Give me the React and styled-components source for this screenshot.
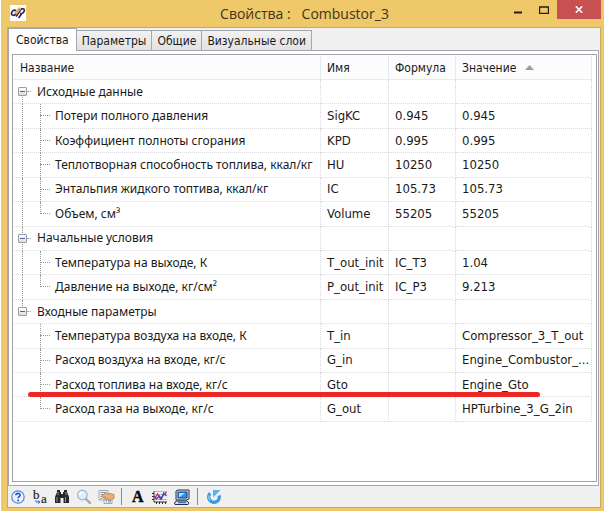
import React from "react";
import styled, { createGlobalStyle } from "styled-components";

const dotted = "1px dotted #d9d9de";

const GlobalStyle = createGlobalStyle`
  *, *::before, *::after { box-sizing: border-box; }
  html, body, #root { height: 100%; }
  body { margin: 0; background: #fff; color: #1a1a1a; }
  body, button { font-family: "DejaVu Sans Condensed", "DejaVu Sans", "Noto Sans", sans-serif; }
`;

const Window = styled.main`
  display: flex;
  flex-direction: column;
  min-height: 100%;
  margin-left: 1px;
  padding: 0 3px 3px 6px;
  background: #efc869;
`;

const TitleBar = styled.header`
  display: flex;
  align-items: flex-start;
  height: 27px;
`;

const AppIcon = styled.svg`
  flex: none;
  width: 16px;
  height: 16px;
  margin: 5px 0 0 3px;
  background: #fff;
`;

const Title = styled.h1`
  flex: 1;
  margin: 0 0 0 78px;
  font: 400 14px/28px "Open Sans", "Noto Sans", sans-serif;
  color: #40361f;
  text-align: center;
  white-space: pre;
`;

const WindowButtons = styled.div`
  display: flex;
`;

const WindowButton = styled.button`
  display: flex;
  align-items: center;
  justify-content: center;
  width: ${(p) => (p.$close ? 44 : 26)}px;
  height: 19px;
  padding: 0;
  border: 0;
  background: ${(p) => (p.$close ? "#c75050" : "transparent")};
`;

const Client = styled.div`
  flex: 1;
  display: flex;
  flex-direction: column;
  border: 1px solid #c5ab68;
  background: #f0f0f0;
`;

const Tabs = styled.div`
  display: flex;
  align-items: flex-end;
  height: 22px;
`;

const Tab = styled.button`
  position: relative;
  height: ${(p) => (p.$selected ? 23 : 20)}px;
  padding: ${(p) => (p.$selected ? "0 7px 1px" : "0 5px")};
  margin-bottom: ${(p) => (p.$selected ? -1 : 0)}px;
  border: 1px solid #a5a7ac;
  border-width: 1px 1px 0 ${(p) => (p.$selected ? 1 : 0)}px;
  background: ${(p) => (p.$selected ? "#fff" : "linear-gradient(#f2f2f2, #e2e2e2)")};
  color: #1a1a1a;
  font-size: 12px;
  white-space: nowrap;
`;

const Panel = styled.section`
  flex: 1;
  display: flex;
  margin-right: 1px;
  padding: 3px 1px 3px 3px;
  border: 1px solid #a5a7ac;
  background: #fff;
`;

const Sheet = styled.div`
  flex: 1;
  padding: 1px 4px 0 1px;
  border: 1px solid #a0a3aa;
`;

const Table = styled.table`
  width: 100%;
  height: 366px;
  table-layout: fixed;
  border-collapse: separate;
  border-spacing: 0;
  font-size: 13px;
  line-height: 16px;
`;

const Col = styled.col`
  width: ${(p) => p.$width};
`;

const HeadCell = styled.th`
  height: 24px;
  padding: 0 0 0 6px;
  border-right: 1px solid #dfebf5;
  border-bottom: 1px solid #dfebf5;
  background: #fcfcfd;
  font-size: 12px;
  font-weight: 400;
  text-align: left;
  white-space: nowrap;
`;

const SortMark = styled.svg`
  width: 9px;
  height: 5px;
  margin-left: 9px;
  vertical-align: 2px;
`;

const Row = styled.tr`
  position: relative;
`;

const Cell = styled.td`
  height: 24px;
  padding: 0 0 0 6px;
  border-right: ${dotted};
  border-bottom: ${dotted};
  overflow: hidden;
  text-overflow: ellipsis;
  white-space: nowrap;
`;

const NameCell = styled.th`
  position: relative;
  height: 24px;
  padding: 0 0 0 ${(p) => (p.$group ? 23 : 41)}px;
  border-right: ${dotted};
  border-bottom: ${dotted};
  font-family: "Noto Sans", "DejaVu Sans Condensed", sans-serif;
  font-size: 12px;
  font-weight: 400;
  text-align: left;
  white-space: nowrap;

  &::before {
    content: "";
    position: absolute;
    left: ${(p) => (p.$group ? 13 : 26)}px;
    top: 11px;
    width: ${(p) => (p.$group ? 4 : 10)}px;
    border-top: 1px dotted #9a9a9a;
  }
`;

const Branch = styled.span`
  position: absolute;
  left: ${(p) => (p.$inner ? 26 : 8)}px;
  top: ${(p) => (p.$from === "middle" ? "50%" : "0")};
  bottom: ${(p) => (p.$to === "middle" ? "50%" : "-1px")};
  border-left: 1px dotted #9a9a9a;
`;

const Toggle = styled.button`
  position: absolute;
  left: 4px;
  top: 7px;
  width: 9px;
  height: 9px;
  padding: 0;
  border: 1px solid #9a9ca2;
  border-radius: 1px;
  background: linear-gradient(#4a62ac, #4a62ac) center / 5px 1px no-repeat, linear-gradient(#fff, #dedede);
`;

const Marker = styled.span`
  position: absolute;
  z-index: 1;
  left: 14px;
  right: 52px;
  bottom: 0;
  height: 5px;
  border-radius: 3px;
  background: #ee2724;
`;

const Toolbar = styled.div`
  display: flex;
  align-items: center;
  height: 21px;
  padding: 0 2px;
  gap: 6px;
`;

const Tool = styled.button`
  display: flex;
  width: 16px;
  height: 16px;
  padding: 0;
  border: 0;
  background: none;

  svg { width: 16px; height: 16px; overflow: visible; }
`;

const Divider = styled.span`
  width: 1px;
  height: 17px;
  margin: 0 2px 0 1px;
  background: #8b8b8b;
`;

const groups = [
  {
    name: "Исходные данные",
    rows: [
      ["Потери полного давления", "SigKC", "0.945", "0.945"],
      ["Коэффициент полноты сгорания", "KPD", "0.995", "0.995"],
      ["Теплотворная способность топлива, ккал/кг", "HU", "10250", "10250"],
      ["Энтальпия жидкого топтива, ккал/кг", "IC", "105.73", "105.73"],
      ["Объем, см³", "Volume", "55205", "55205"],
    ],
  },
  {
    name: "Начальные условия",
    rows: [
      ["Температура на выходе, К", "T_out_init", "IC_T3", "1.04"],
      ["Давление на выходе, кг/см²", "P_out_init", "IC_P3", "9.213"],
    ],
  },
  {
    name: "Входные параметры",
    rows: [
      ["Температура воздуха на входе, К", "T_in", "", "Compressor_3_T_out"],
      ["Расход воздуха на входе, кг/с", "G_in", "", "Engine_Combustor_..."],
      ["Расход топлива на входе, кг/с", "Gto", "", "Engine_Gto", true],
      ["Расход газа на выходе, кг/с", "G_out", "", "HPTurbine_3_G_2in"],
    ],
  },
];

const tools = [
  ["Справка", (
    <svg viewBox="0 0 16 16">
      <circle cx="8" cy="8" r="6.2" fill="#edf4ff" stroke="#5b86d8" strokeWidth="1.2" />
      <path d="M5.900 6.300c.1-2.700 4.300-2.500 4.200-.1-.1 1.400-2 1.500-2 3.100" fill="none" stroke="#2457c5" strokeWidth="1.7" />
      <circle cx="8.1" cy="11.4" r="1" fill="#2457c5" />
    </svg>
  )],
  ["Переименовать", (
    <svg viewBox="0 0 16 16" fontFamily="Liberation Serif, serif" fontSize="13" fill="#1d1d1d" stroke="#1d1d1d" strokeWidth=".2">
      <text x="1" y="10">b</text>
      <text x="9" y="14">a</text>
      <path d="M4 11v2h4M6 11.500l2 1.500-2 1.500" fill="none" stroke="#2c6ad4" strokeWidth="1" />
    </svg>
  )],
  ["Найти", (
    <svg viewBox="0 0 16 16">
      <path d="M3 1h3v2h1v2h2V3h1V1h3v2l2 5v6H9.500V9h-3v5H1V8l2-5z" fill="#27282b" />
      <path d="M4 3v3M12 3v3M3 8v5M11.500 8v5" stroke="#8e959f" strokeWidth="1" />
    </svg>
  )],
  ["Просмотр", (
    <svg viewBox="0 0 16 16">
      <path d="m10 10 4 4" stroke="#aaa59e" strokeWidth="2.4" strokeLinecap="round" />
      <circle cx="6.400" cy="6" r="4.800" fill="#dceffb" stroke="#9cb6cb" strokeWidth="1.2" />
      <path d="M3.800 6c0-1.600 1-2.400 2.400-2.500" stroke="#fff" strokeWidth="1.3" fill="none" />
    </svg>
  )],
  ["Свойства", (
    <svg viewBox="0 0 16 16">
      <path d="M1 1.500h9V11H1zM6 6h8v8.500H6z" fill="#f5f5f4" stroke="#a3a9ae" />
      <path d="M2.500 3.500h6M2.500 5.500h3M2.500 7.500h2M2.500 9.500h2M8 11.500h1M10 11.500h3M8 13h1M10 13h3" stroke="#7b93a5" />
      <path d="M4 6.500 7 4.500l3 .5 2-.5 4 1v4l-4 1-2-1-2 1-1.500-1 1.500-1.500-3 .5z" fill="#eeb077" stroke="#c77935" strokeWidth=".8" />
    </svg>
  )],
  null,
  ["Шрифт", (
    <svg viewBox="0 0 16 16">
      <text x="2" y="13" fontFamily="Liberation Serif, serif" fontWeight="700" fontSize="16" fill="#080808" stroke="#080808" strokeWidth=".4">A</text>
    </svg>
  )],
  ["График", (
    <svg viewBox="0 0 16 16">
      <path d="M2 2v11h13M0 4.500h2M0 7.500h2M0 10.500h2M4.500 13v2M7.500 13v2M10.500 13v2M13.500 13v2" fill="none" stroke="#303030" />
      <path d="M2 2.500h13M2 5.500h13M2 10.500h13" stroke="#aaa" strokeWidth=".8" />
      <path d="m2.500 10 3-5 3 5 3-4 3-3" fill="none" stroke="#dd2930" strokeWidth="1.4" />
      <path d="m2.500 7 2 3 3-3 2 3 2-6 3 3" fill="none" stroke="#3845c4" strokeWidth="1.2" />
    </svg>
  )],
  ["Экран", (
    <svg viewBox="0 0 16 16">
      <path d="m2 2 2-1h11v9l-2 1H2z" fill="#d8d8ce" stroke="#26344d" />
      <path d="M4 3h9v6H4z" fill="#2e8fe0" stroke="#1746a5" />
      <path d="M5 4h6L5 8.500z" fill="#9ee9fa" />
      <path d="M2 12h11l2 2-1 1.500H1L.5 14z" fill="#e5e3d6" stroke="#202c49" />
      <path d="M4 13.700h8" stroke="#2457ad" />
    </svg>
  )],
  null,
  ["Обновить", (
    <svg viewBox="0 0 16 16">
      <path d="M4.200 4.300a5.300 5.300 0 1 0 8.900 2.200" fill="none" stroke="#3b9bdc" strokeWidth="3.4" />
      <path d="M7 1v7.500L14.500 1z" fill="#55b4ea" />
      <path d="M3 6.500a5.300 5.300 0 0 0 1 5" fill="none" stroke="#a4dbf7" strokeWidth="1" />
    </svg>
  )],
];

function ItemRow({ item, last, lastGroup }) {
  const [name, id, formula, value, marked] = item;
  return (
    <Row>
      <NameCell scope="row">
        {!lastGroup && <Branch />}
        <Branch $inner $to={last ? "middle" : "end"} />
        {name}
      </NameCell>
      <Cell>{id}</Cell>
      <Cell>{formula}</Cell>
      <Cell>
        {value}
        {marked && <Marker />}
      </Cell>
    </Row>
  );
}

export default function App() {
  return (
    <>
      <GlobalStyle />
      <Window>
        <TitleBar>
          <AppIcon viewBox="0 0 16 16" aria-hidden="true">
            <g fill="none" strokeWidth="1.7">
              <path d="M6 5.500C3.500 4.500 1.500 6.500 1.500 8.500c0 2 2.500 2.500 4.500.5" stroke="#26235e" />
              <path d="M6 11.500 10.500 5c1.500-2 4-1.500 3.800.5-.2 2-2 3.500-4.300 3M8.500 13l3-4" stroke="#26235e" />
              <path d="m4.500 8.500 5.500-6M6 9.500l4.500-5.500" stroke="#e2923a" strokeWidth="1.2" />
            </g>
          </AppIcon>
          <Title>{"Свойства :   Combustor_3"}</Title>
          <WindowButtons>
            <WindowButton aria-label="Свернуть">
              <svg width="9" height="9"><path d="M0 7.500h8" stroke="#241f14" strokeWidth="2" /></svg>
            </WindowButton>
            <WindowButton aria-label="Развернуть">
              <svg width="10" height="8"><path d="M.5 1v6.500h9V1M0 1h10" fill="none" stroke="#241f14" strokeWidth="1.4" /></svg>
            </WindowButton>
            <WindowButton $close aria-label="Закрыть">
              <svg width="8" height="7"><path d="m.8.3 6.400 6.400M7.200.3.8 6.700" stroke="#fff" strokeWidth="1.6" /></svg>
            </WindowButton>
          </WindowButtons>
        </TitleBar>
        <Client>
          <Tabs role="tablist">
            <Tab role="tab" aria-selected="true" $selected>Свойства</Tab>
            <Tab role="tab" aria-selected="false">Параметры</Tab>
            <Tab role="tab" aria-selected="false">Общие</Tab>
            <Tab role="tab" aria-selected="false">Визуальные слои</Tab>
          </Tabs>
          <Panel>
            <Sheet>
              <Table>
                <colgroup>
                  <Col $width="auto" />
                  <Col $width="68px" />
                  <Col $width="67px" />
                  <Col $width="136px" />
                </colgroup>
                <thead>
                  <tr>
                    <HeadCell scope="col">Название</HeadCell>
                    <HeadCell scope="col">Имя</HeadCell>
                    <HeadCell scope="col">Формула</HeadCell>
                    <HeadCell scope="col">
                      Значение
                      <SortMark viewBox="0 0 9 5"><path d="M0 5 4.500 0 9 5z" fill="#9c9c9c" /></SortMark>
                    </HeadCell>
                  </tr>
                </thead>
                <tbody>
                  {groups.map((group, g) => {
                    const lastGroup = g === groups.length - 1;
                    return (
                      <React.Fragment key={group.name}>
                        <Row>
                          <NameCell scope="row" $group>
                            <Branch $from={g === 0 ? "middle" : "start"} $to={lastGroup ? "middle" : "end"} />
                            <Toggle aria-label={group.name} aria-expanded="true" />
                            {group.name}
                          </NameCell>
                          <Cell />
                          <Cell />
                          <Cell />
                        </Row>
                        {group.rows.map((item, i) => (
                          <ItemRow key={item[0]} item={item} last={i === group.rows.length - 1} lastGroup={lastGroup} />
                        ))}
                      </React.Fragment>
                    );
                  })}
                </tbody>
              </Table>
            </Sheet>
          </Panel>
          <Toolbar role="toolbar">
            {tools.map((tool, i) =>
              tool ? <Tool key={i} aria-label={tool[0]}>{tool[1]}</Tool> : <Divider key={i} />
            )}
          </Toolbar>
        </Client>
      </Window>
    </>
  );
}
